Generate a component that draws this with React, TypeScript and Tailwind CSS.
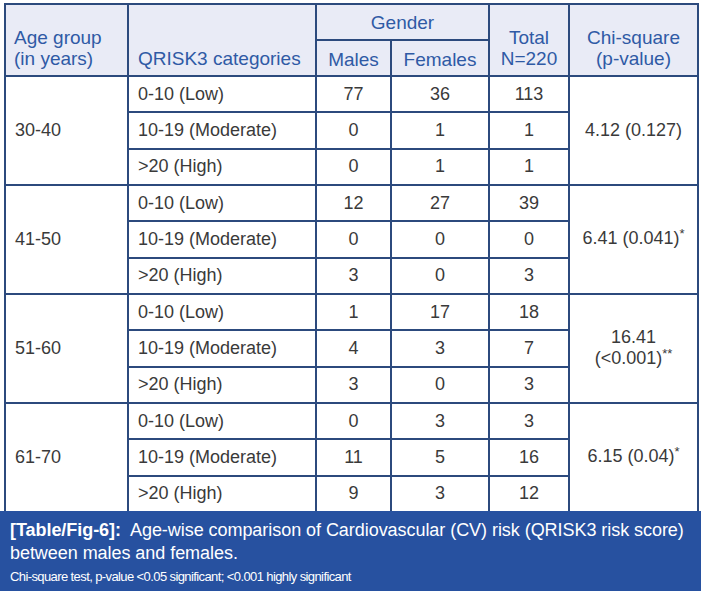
import React from "react";

const groups = [
  { age: "30-40", chi: ["4.12 (0.127)"], rows: [["0-10 (Low)", "77", "36", "113"], ["10-19 (Moderate)", "0", "1", "1"], [">20 (High)", "0", "1", "1"]] },
  { age: "41-50", chi: ["6.41 (0.041)*"], rows: [["0-10 (Low)", "12", "27", "39"], ["10-19 (Moderate)", "0", "0", "0"], [">20 (High)", "3", "0", "3"]] },
  { age: "51-60", chi: ["16.41", "(<0.001)**"], rows: [["0-10 (Low)", "1", "17", "18"], ["10-19 (Moderate)", "4", "3", "7"], [">20 (High)", "3", "0", "3"]] },
  { age: "61-70", chi: ["6.15 (0.04)*"], rows: [["0-10 (Low)", "0", "3", "3"], ["10-19 (Moderate)", "11", "5", "16"], [">20 (High)", "9", "3", "12"]] },
];

const bd = "border-2 border-[#2c4a7d]";

function Chi({ parts }: { parts: string[] }) {
  return (
    <>
      {parts.map((p, i) => {
        const m = p.match(/^(.*?)(\*+)$/);
        return (
          <div key={i}>
            {m ? (
              <>
                {m[1]}
                <span className="text-[13px] relative top-[-6px]">{m[2]}</span>
              </>
            ) : (
              p
            )}
          </div>
        );
      })}
    </>
  );
}

export default function App() {
  return (
    <div className="w-[701px] h-[593px] bg-white relative" style={{ fontFamily: '"Liberation Sans", Arial, sans-serif' }}>
      <div className="pt-[3px] pl-[4px]">
        <table className="border-collapse table-fixed w-[693px] text-[18px] leading-[21px]">
          <colgroup>
            <col className="w-[123px]" />
            <col className="w-[188px]" />
            <col className="w-[75px]" />
            <col className="w-[98px]" />
            <col className="w-[80px]" />
            <col className="w-[129px]" />
          </colgroup>
          <thead className="bg-[#e9ebf6] text-[#2f5aa5] text-[19px]">
            <tr className="h-[36px]">
              <th rowSpan={2} className={`${bd} align-bottom text-left font-normal pl-[8px] pb-[6px]`}>
                Age group<br />(in years)
              </th>
              <th rowSpan={2} className={`${bd} align-bottom text-left font-normal pl-[9px] pb-[6px]`}>
                QRISK3 categories
              </th>
              <th colSpan={2} className={`${bd} align-middle text-center font-normal`}>
                Gender
              </th>
              <th rowSpan={2} className={`${bd} align-bottom text-center font-normal pb-[6px]`}>
                Total<br />N=220
              </th>
              <th rowSpan={2} className={`${bd} align-bottom text-center font-normal pb-[6px]`}>
                Chi-square<br />(p-value)
              </th>
            </tr>
            <tr className="h-[36px]">
              <th className={`${bd} align-middle text-center font-normal pt-[2px]`}>Males</th>
              <th className={`${bd} align-middle text-center font-normal pt-[2px]`}>Females</th>
            </tr>
          </thead>
          <tbody className="text-[#3a3a3a]">
            {groups.map((g) =>
              g.rows.map((r, i) => (
                <tr key={g.age + i} className="h-[36.33px]">
                  {i === 0 && (
                    <td rowSpan={3} className={`${bd} pl-[9px] align-middle`}>
                      {g.age}
                    </td>
                  )}
                  <td className={`${bd} pl-[9px]`}>{r[0]}</td>
                  <td className={`${bd} text-center`}>{r[1]}</td>
                  <td className={`${bd} text-center`}>{r[2]}</td>
                  <td className={`${bd} text-center`}>{r[3]}</td>
                  {i === 0 && (
                    <td rowSpan={3} className={`${bd} text-center align-middle`}>
                      <Chi parts={g.chi} />
                    </td>
                  )}
                </tr>
              ))
            )}
          </tbody>
        </table>
      </div>
      <div className="absolute left-0 right-0 top-[511px] h-[80px] bg-[#2751a0] text-white px-[10px] pt-[8px]">
        <p className="text-[18px] leading-[23px] tracking-[-0.05px] whitespace-nowrap">
          <b className="font-bold mr-[9px]">[Table/Fig-6]:</b>
          <span>Age-wise comparison of Cardiovascular (CV) risk (QRISK3 risk score)</span>
        </p>
        <p className="text-[18px] leading-[23px] tracking-[-0.05px]">between males and females.</p>
        <p className="text-[13px] leading-[23px] tracking-[-0.6px]">
          Chi-square test, p-value &lt;0.05 significant; &lt;0.001 highly significant
        </p>
      </div>
    </div>
  );
}
